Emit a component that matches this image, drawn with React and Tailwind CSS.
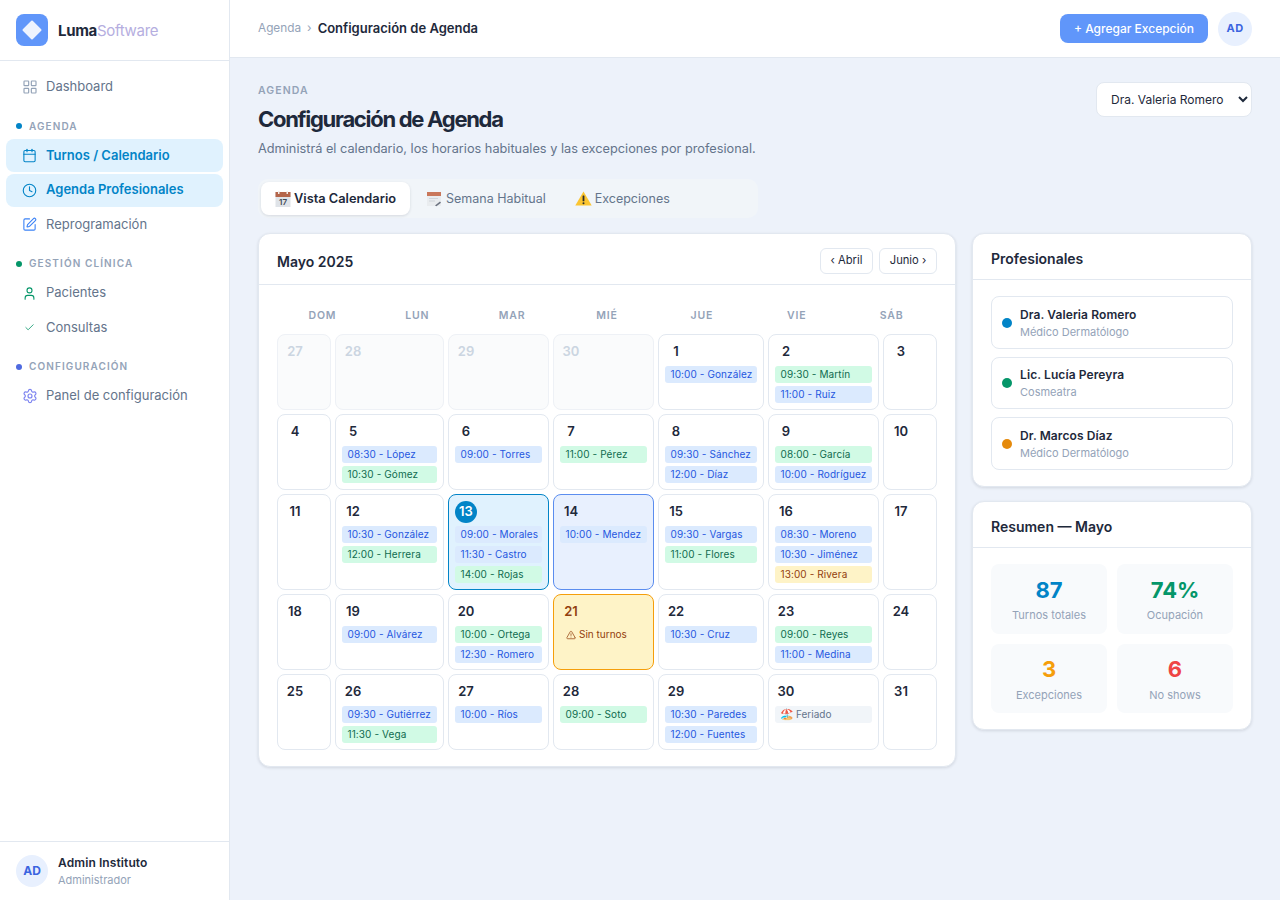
import { LayoutGrid, Calendar, Clock, SquarePen, User, Check, Settings, TriangleAlert } from 'lucide-react'

const navSections = [
  { label: 'Agenda', dot: 'bg-[#0284c7]', items: [
    { name: 'Turnos / Calendario', icon: Calendar, active: true },
    { name: 'Agenda Profesionales', icon: Clock, active: true },
    { name: 'Reprogramación', icon: SquarePen, color: 'text-[#3b82f6]' },
  ] },
  { label: 'Gestión Clínica', dot: 'bg-[#059669]', items: [
    { name: 'Pacientes', icon: User, color: 'text-[#059669]' },
    { name: 'Consultas', icon: Check, size: 11, color: 'text-[#059669]' },
  ] },
  { label: 'Configuración', dot: 'bg-[#4f6ae0]', items: [
    { name: 'Panel de configuración', icon: Settings, size: 16, color: 'text-[#7c83f0]' },
  ] },
]

const weekDays = ['Dom', 'Lun', 'Mar', 'Mié', 'Jue', 'Vie', 'Sáb']

// b = azul, g = verde, y = amarillo
const days = [
  { n: 27, off: true }, { n: 28, off: true }, { n: 29, off: true }, { n: 30, off: true },
  { n: 1, ev: [['b', '10:00 - González']] },
  { n: 2, ev: [['g', '09:30 - Martín'], ['b', '11:00 - Ruiz']] },
  { n: 3 },
  { n: 4 },
  { n: 5, ev: [['b', '08:30 - López'], ['g', '10:30 - Gómez']] },
  { n: 6, ev: [['b', '09:00 - Torres']] },
  { n: 7, ev: [['g', '11:00 - Pérez']] },
  { n: 8, ev: [['b', '09:30 - Sánchez'], ['b', '12:00 - Díaz']] },
  { n: 9, ev: [['g', '08:00 - García'], ['b', '10:00 - Rodríguez']] },
  { n: 10 },
  { n: 11 },
  { n: 12, ev: [['b', '10:30 - González'], ['g', '12:00 - Herrera']] },
  { n: 13, today: true, ev: [['b', '09:00 - Morales'], ['b', '11:30 - Castro'], ['g', '14:00 - Rojas']] },
  { n: 14, selected: true, ev: [['b', '10:00 - Mendez']] },
  { n: 15, ev: [['b', '09:30 - Vargas'], ['g', '11:00 - Flores']] },
  { n: 16, ev: [['b', '08:30 - Moreno'], ['b', '10:30 - Jiménez'], ['y', '13:00 - Rivera']] },
  { n: 17 },
  { n: 18 },
  { n: 19, ev: [['b', '09:00 - Alvárez']] },
  { n: 20, ev: [['g', '10:00 - Ortega'], ['b', '12:30 - Romero']] },
  { n: 21, closed: true },
  { n: 22, ev: [['b', '10:30 - Cruz']] },
  { n: 23, ev: [['g', '09:00 - Reyes'], ['b', '11:00 - Medina']] },
  { n: 24 },
  { n: 25 },
  { n: 26, ev: [['b', '09:30 - Gutiérrez'], ['g', '11:30 - Vega']] },
  { n: 27, ev: [['b', '10:00 - Ríos']] },
  { n: 28, ev: [['g', '09:00 - Soto']] },
  { n: 29, ev: [['b', '10:30 - Paredes'], ['b', '12:00 - Fuentes']] },
  { n: 30, holiday: true },
  { n: 31 },
]

const chipColors = {
  b: 'bg-[#dbeafe] text-[#2557e0]',
  g: 'bg-[#d1fae5] text-[#0f6b4f]',
  y: 'bg-[#fef3c7] text-[#92400e]',
}

const pros = [
  { name: 'Dra. Valeria Romero', role: 'Médico Dermatólogo', dot: 'bg-[#0284c7]', h: 'h-[53px]' },
  { name: 'Lic. Lucía Pereyra', role: 'Cosmeatra', dot: 'bg-[#059669]', h: 'h-[52px]' },
  { name: 'Dr. Marcos Díaz', role: 'Médico Dermatólogo', dot: 'bg-[#e58a0c]', h: 'h-[53px]' },
]

const stats = [
  { value: '87', label: 'Turnos totales', color: 'text-[#0284c7]' },
  { value: '74%', label: 'Ocupación', color: 'text-[#059669]' },
  { value: '3', label: 'Excepciones', color: 'text-[#f59e0b]' },
  { value: '6', label: 'No shows', color: 'text-[#ef4444]' },
]

function CalendarEmoji() {
  return (
    <svg width="16" height="16" viewBox="0 0 16 16" className="shrink-0">
      <rect x="0.5" y="1" width="15" height="15" fill="#dfe3e8" />
      <rect x="0.5" y="1" width="15" height="5" fill="#b4654a" />
      <rect x="3" y="0" width="1.5" height="3" fill="#f3ede8" />
      <rect x="11.5" y="0" width="1.5" height="3" fill="#f3ede8" />
      <text x="8" y="13.5" textAnchor="middle" fontSize="8" fill="#3f4a56">17</text>
    </svg>
  )
}

function NotepadEmoji() {
  return (
    <svg width="16" height="16" viewBox="0 0 16 16" className="shrink-0">
      <rect x="1" y="1" width="14" height="14" fill="#e9ecef" />
      <rect x="1" y="1" width="14" height="4" fill="#c9775b" />
      <path d="M3 7.5h9M3 10h6" stroke="#cfd4da" strokeWidth="1" />
      <path d="M9 14.5l5-4 1 1.2-4.6 3.6z" fill="#6b7280" />
    </svg>
  )
}

function WarningEmoji() {
  return (
    <svg width="17" height="15" viewBox="0 0 17 15" className="shrink-0">
      <path d="M8.5 0.5L16.7 14.5H0.3z" fill="#fbc531" />
      <rect x="7.6" y="4.5" width="1.8" height="5.8" rx="0.6" fill="#2b2b2b" />
      <circle cx="8.5" cy="12.2" r="1" fill="#2b2b2b" />
    </svg>
  )
}

function Sidebar() {
  return (
    <aside className="w-[230px] shrink-0 bg-white border-r border-[#e2e8f0] flex flex-col">
      <div className="h-[61px] shrink-0 border-b border-[#e2e8f0] px-4 pb-[1px] flex items-center gap-[10px]">
        <div className="w-8 h-8 rounded-lg bg-[#6096fa] flex items-center justify-center">
          <div className="w-[14px] h-[14px] bg-[#eef3fe] rotate-45 rounded-[1px]" />
        </div>
        <div className="mt-[3px] text-[15px] tracking-[-0.3px]">
          <span className="font-bold text-[#1e293b]">Luma</span>
          <span className="font-normal text-[#b5aee0]">Software</span>
        </div>
      </div>
      <nav className="flex-1 pt-[8.5px] px-[6px]">
        <a className="h-[34px] flex items-center gap-[9px] pl-4 text-[13px] text-[#64748b]">
          <span className="w-[15px] flex justify-center">
            <LayoutGrid size={16} strokeWidth={1.75} className="shrink-0 text-[#94a3b8]" />
          </span>
          Dashboard
        </a>
        {navSections.map((section) => (
          <div key={section.label} className="mt-[14.5px]">
            <div className="h-4 mb-[5px] pl-[10px] flex items-center gap-[7px] text-[10px] font-semibold uppercase tracking-[1.1px] text-[#94a3b8]">
              <span className={`w-[6px] h-[6px] rounded-full ${section.dot}`} />
              {section.label}
            </div>
            {section.items.map((item) => (
              <a
                key={item.name}
                className={`h-[33px] mb-[1.5px] rounded-lg flex items-center gap-[9px] pl-4 text-[13px] ${item.active ? 'bg-[#e0f2fe] text-[#0284c7] font-semibold' : 'text-[#64748b]'}`}
              >
                <span className="w-[15px] flex justify-center">
                  <item.icon size={item.size || 15} strokeWidth={1.75} className={`shrink-0 ${item.active ? 'text-[#0284c7]' : item.color}`} />
                </span>
                {item.name}
              </a>
            ))}
          </div>
        ))}
      </nav>
      <div className="h-[59px] shrink-0 border-t border-[#e2e8f0] px-4 flex items-center gap-[10px]">
        <div className="w-8 h-8 rounded-full bg-[#e8f0fe] flex items-center justify-center text-[12px] font-bold text-[#3b64e0]">AD</div>
        <div>
          <div className="text-[12px] leading-[16px] font-semibold tracking-[0.1px] text-[#1e293b]">Admin Instituto</div>
          <div className="text-[11px] leading-[14px] mt-[2px] text-[#94a3b8]">Administrador</div>
        </div>
      </div>
    </aside>
  )
}

function DayCell({ day }) {
  let cell = 'bg-white border-[#e2e8f0]'
  if (day.off) cell = 'bg-[#fafbfc] border-[#eef1f6]'
  if (day.today) cell = 'bg-[#e0f2fe] border-[#0284c7]'
  if (day.selected) cell = 'bg-[#e8f0fe] border-[#5b8def]'
  if (day.closed) cell = 'bg-[#fef3c7] border-[#f59e0b]'

  let num = 'text-[#1e293b]'
  if (day.off) num = 'text-[#cbd5e1]'
  if (day.closed) num = 'text-[#92400e]'

  return (
    <div className={`min-h-[76px] border rounded-lg p-[6px] ${cell}`}>
      {day.today ? (
        <div className="w-[22px] h-[22px] mb-[3px] rounded-full bg-[#0284c7] text-white flex items-center justify-center text-[13px] font-semibold">{day.n}</div>
      ) : (
        <div className={`w-[22px] h-[22px] mb-[3px] flex items-center justify-center text-[13px] font-semibold ${num}`}>{day.n}</div>
      )}
      <div className="flex flex-col gap-[3px]">
        {day.ev?.map(([kind, text]) => (
          <div key={text} className={`h-[17px] rounded-[3px] px-[5.5px] text-[10px] leading-[17px] tracking-[0.1px] whitespace-nowrap overflow-hidden ${chipColors[kind]}`}>{text}</div>
        ))}
        {day.closed && (
          <div className="h-[17px] px-[6px] flex items-center gap-[3px] text-[10px] text-[#92400e]">
            <TriangleAlert size={10} strokeWidth={1.75} />
            Sin turnos
          </div>
        )}
        {day.holiday && (
          <div className="h-[17px] rounded-[3px] px-[5px] bg-[#f1f5f9] flex items-center gap-[2px] text-[10px] text-[#64748b]">
            <span className="text-[11px]">🏖️</span>
            Feriado
          </div>
        )}
      </div>
    </div>
  )
}

function CalendarCard() {
  return (
    <section className="w-[698px] shrink-0 bg-white border border-[#e2e8f0] rounded-xl shadow-[0_1px_3px_rgba(15,23,42,0.12)]">
      <div className="h-[51px] border-b border-[#e2e8f0] pl-[18px] pr-[18px] pt-[3px] flex items-center justify-between">
        <h2 className="mt-[1px] text-[14px] font-semibold text-[#1e293b]">Mayo 2025</h2>
        <div className="flex gap-[6px]">
          <button className="w-[53px] h-[26px] bg-white border border-[#e2e8f0] rounded-md text-[11.2px] text-[#1e293b]">‹ Abril</button>
          <button className="w-[58px] h-[26px] bg-white border border-[#e2e8f0] rounded-md text-[11.2px] text-[#1e293b]">Junio ›</button>
        </div>
      </div>
      <div className="pt-[18px] pb-4 px-[18px]">
        <div className="grid grid-cols-7 gap-1 mb-[5px]">
          {weekDays.map((d) => (
            <div key={d} className="h-[26px] flex items-center justify-center text-[10.5px] font-semibold uppercase tracking-[0.8px] text-[#94a3b8]">{d}</div>
          ))}
        </div>
        <div className="grid grid-cols-[54px_109px_101px_101px_106px_111px_54px] gap-1">
          {days.map((day, i) => (
            <DayCell key={i} day={day} />
          ))}
        </div>
      </div>
    </section>
  )
}

function App() {
  return (
    <div className="min-h-[900px] h-[900px] flex bg-[#edf2fa] font-['Inter',sans-serif] overflow-hidden">
      <Sidebar />
      <div className="flex-1 flex flex-col min-w-0">
        <header className="h-[58px] shrink-0 bg-white border-b border-[#e2e8f0] pl-7 pr-7 flex items-center justify-between">
          <div className="flex items-center gap-[6px] text-[11.8px] text-[#94a3b8]">
            <span>Agenda</span>
            <span>›</span>
            <span className="text-[13px] font-semibold text-[#1e293b]">Configuración de Agenda</span>
          </div>
          <div className="flex items-center gap-[10px]">
            <button className="w-[148px] h-[29px] pt-[1px] rounded-lg bg-[#6096fa] text-white text-[12px] font-medium">+ Agregar Excepción</button>
            <div className="w-[34px] h-[34px] rounded-full bg-[#e8f0fe] flex items-center justify-center text-[11px] font-bold tracking-[0.4px] text-[#3b64e0]">AD</div>
          </div>
        </header>

        <main className="flex-1 pl-7 pr-7 pt-6">
          <div className="flex justify-between items-start h-[97px]">
            <div className="pt-[1px]">
              <div className="text-[10.5px] leading-4 font-semibold uppercase tracking-[1.1px] text-[#94a3b8]">Agenda</div>
              <h1 className="mt-[6px] text-[22px] leading-7 font-bold tracking-[-1.28px] text-[#1e293b]">Configuración de Agenda</h1>
              <p className="mt-[6px] text-[12.75px] leading-5 text-[#64748b]">Administrá el calendario, los horarios habituales y las excepciones por profesional.</p>
            </div>
            <select className="w-[156px] h-[35px] bg-white border border-[#e2e8f0] rounded-lg px-[10px] text-[12px] text-[#1e293b]">
              <option>Dra. Valeria Romero</option>
              <option>Lic. Lucía Pereyra</option>
              <option>Dr. Marcos Díaz</option>
            </select>
          </div>

          <div className="w-[500px] h-[39px] rounded-[10px] bg-[#f1f5f9] flex items-center gap-[2px] px-[3px] mb-[15px]">
            <button className="w-[149px] h-[33px] px-[14px] rounded-lg bg-white shadow-[0_1px_3px_rgba(15,23,42,0.12)] flex items-center gap-[3px] text-[12.8px] font-semibold text-[#1e293b]">
              <CalendarEmoji />
              <span className="pt-[1px] whitespace-nowrap">Vista Calendario</span>
            </button>
            <button className="h-[33px] px-[14px] rounded-lg flex items-center gap-1 text-[12.5px] text-[#64748b]">
              <NotepadEmoji />
              <span className="pt-[1px]">Semana Habitual</span>
            </button>
            <button className="h-[33px] px-[13px] rounded-lg flex items-center gap-[3px] text-[12.5px] text-[#64748b]">
              <WarningEmoji />
              <span className="pt-[1px]">Excepciones</span>
            </button>
          </div>

          <div className="flex items-start gap-4">
            <CalendarCard />
            <div className="w-[280px] shrink-0 flex flex-col gap-[14px]">
              <section className="bg-white border border-[#e2e8f0] rounded-xl shadow-[0_1px_3px_rgba(15,23,42,0.12)]">
                <div className="h-[46px] border-b border-[#e2e8f0] px-[18px] pt-[3px] flex items-center">
                  <h2 className="text-[14px] font-semibold text-[#1e293b]">Profesionales</h2>
                </div>
                <div className="p-4 px-[18px] flex flex-col gap-2">
                  {pros.map((p) => (
                    <div key={p.name} className={`${p.h} border border-[#e2e8f0] rounded-lg pl-[10px] flex items-center gap-2`}>
                      <span className={`w-[10px] h-[10px] rounded-full ${p.dot}`} />
                      <div>
                        <div className="text-[12px] leading-4 font-semibold tracking-[0.1px] text-[#1e293b]">{p.name}</div>
                        <div className="text-[11px] leading-[14px] mt-[2px] text-[#94a3b8]">{p.role}</div>
                      </div>
                    </div>
                  ))}
                </div>
              </section>
              <section className="bg-white border border-[#e2e8f0] rounded-xl shadow-[0_1px_3px_rgba(15,23,42,0.12)]">
                <div className="h-[46px] border-b border-[#e2e8f0] px-[18px] pt-[3px] flex items-center">
                  <h2 className="text-[14px] font-semibold text-[#1e293b]">Resumen — Mayo</h2>
                </div>
                <div className="p-4 px-[18px] grid grid-cols-2 gap-[10px]">
                  {stats.map((s) => (
                    <div key={s.label} className="h-[69.5px] rounded-lg bg-[#f8fafc] flex flex-col items-center justify-center">
                      <div className={`text-[22px] leading-7 font-bold ${s.color}`}>{s.value}</div>
                      <div className="text-[11px] leading-[14px] mt-[4.5px] text-[#94a3b8]">{s.label}</div>
                    </div>
                  ))}
                </div>
              </section>
            </div>
          </div>
        </main>
      </div>
    </div>
  )
}

export default App
